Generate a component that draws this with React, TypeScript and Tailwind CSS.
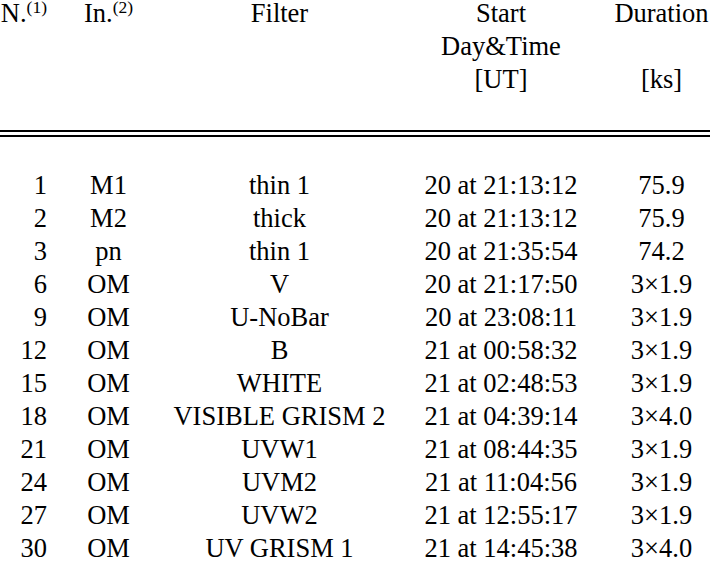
import React from "react";

const rows: [string, string, string, string, string][] = [
  ["1", "M1", "thin 1", "20 at 21:13:12", "75.9"],
  ["2", "M2", "thick", "20 at 21:13:12", "75.9"],
  ["3", "pn", "thin 1", "20 at 21:35:54", "74.2"],
  ["6", "OM", "V", "20 at 21:17:50", "3×1.9"],
  ["9", "OM", "U-NoBar", "20 at 23:08:11", "3×1.9"],
  ["12", "OM", "B", "21 at 00:58:32", "3×1.9"],
  ["15", "OM", "WHITE", "21 at 02:48:53", "3×1.9"],
  ["18", "OM", "VISIBLE GRISM 2", "21 at 04:39:14", "3×4.0"],
  ["21", "OM", "UVW1", "21 at 08:44:35", "3×1.9"],
  ["24", "OM", "UVM2", "21 at 11:04:56", "3×1.9"],
  ["27", "OM", "UVW2", "21 at 12:55:17", "3×1.9"],
  ["30", "OM", "UV GRISM 1", "21 at 14:45:38", "3×4.0"],
];

const grid = "grid grid-cols-[47px_123px_219px_224px_97px]";

export default function App() {
  return (
    <div className="w-[710px] h-[561px] overflow-hidden bg-white text-black text-[26.5px] leading-[33px] font-['Liberation_Serif','Times_New_Roman',serif]">
      <div className={grid + " leading-[27px]"}>
        <div className="text-right whitespace-nowrap">
          N.<span className="text-[17.5px] align-[9px] leading-[0px]">(1)</span>
        </div>
        <div className="text-center whitespace-nowrap">
          In.<span className="text-[17.5px] align-[9px] leading-[0px]">(2)</span>
        </div>
        <div className="text-center">Filter</div>
        <div className="text-center flex flex-col gap-[6px]">
          <span>Start</span>
          <span>Day&amp;Time</span>
          <span>[UT]</span>
        </div>
        <div className="text-center flex flex-col gap-[6px]">
          <span>Duration</span>
          <span>&nbsp;</span>
          <span>[ks]</span>
        </div>
      </div>
      <div className="mt-[37px] border-t-2 border-black" />
      <div className="mt-[3px] border-t-2 border-black" />
      <div className="mt-[32px] flex flex-col">
        {rows.map((r) => (
          <div key={r[0]} className={grid}>
            <div className="text-right">{r[0]}</div>
            <div className="text-center">{r[1]}</div>
            <div className="text-center whitespace-nowrap">{r[2]}</div>
            <div className="text-center whitespace-nowrap">{r[3]}</div>
            <div className="text-center whitespace-nowrap">{r[4]}</div>
          </div>
        ))}
      </div>
    </div>
  );
}
